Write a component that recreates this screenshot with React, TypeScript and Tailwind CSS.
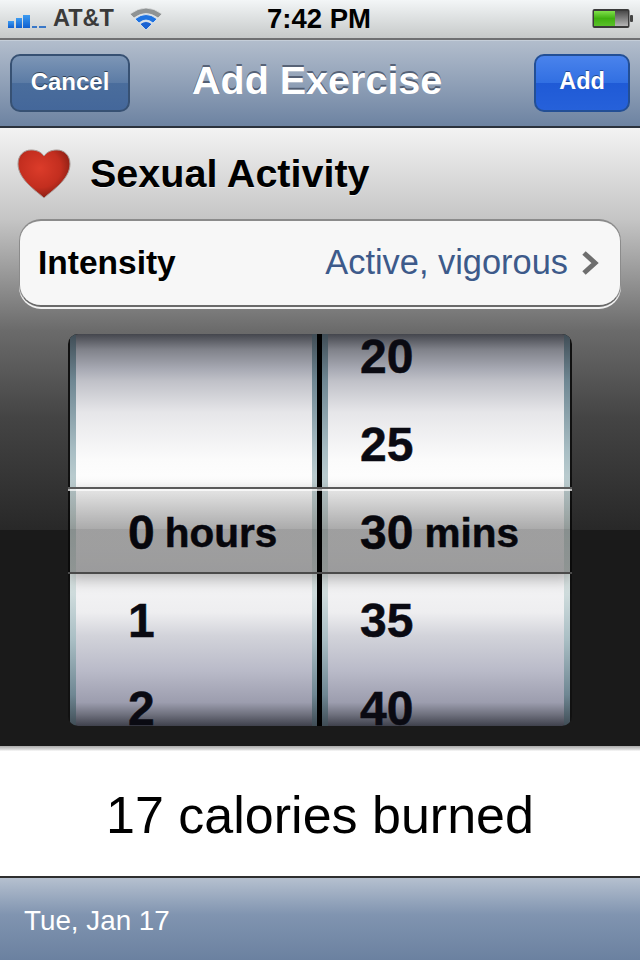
import React from "react";

const Signal = () => (
  <svg width="40" height="20" viewBox="0 0 40 20" className="ml-[8px]">
    <defs>
      <linearGradient id="sig" x1="0" y1="0" x2="0" y2="1">
        <stop offset="0" stopColor="#3d9bf0" />
        <stop offset="1" stopColor="#0f5fd0" />
      </linearGradient>
    </defs>
    <rect x="0" y="12" width="6" height="7" fill="url(#sig)" />
    <rect x="8" y="9" width="6" height="10" fill="url(#sig)" />
    <rect x="15" y="6" width="7" height="13" fill="url(#sig)" />
    <rect x="24" y="17" width="5" height="2" fill="#3a78c8" />
    <rect x="31" y="17" width="7" height="2" fill="#3a78c8" />
  </svg>
);

const Wifi = () => (
  <svg width="34" height="26" viewBox="0 0 34 26" className="ml-[15px]">
    <path d="M1 8 Q17 -4 33 8 L29 12 Q17 3 5 12 Z" fill="#8f9394" stroke="#e8eaea" strokeWidth="0.7" />
    <path d="M6 13 Q17 4 28 13 L24 17 Q17 11 10 17 Z" fill="#1f73e0" stroke="#f2f4f4" strokeWidth="0.7" />
    <path d="M11 18 Q17 13 23 18 L17 24 Z" fill="#1a62d2" stroke="#f2f4f4" strokeWidth="0.7" />
  </svg>
);

const Battery = () => (
  <svg width="42" height="22" viewBox="0 0 42 22">
    <defs>
      <linearGradient id="bat" x1="0" y1="0" x2="0" y2="1">
        <stop offset="0" stopColor="#7fe04a" />
        <stop offset="0.5" stopColor="#3fb010" />
        <stop offset="1" stopColor="#5ac02a" />
      </linearGradient>
      <linearGradient id="batEmpty" x1="0" y1="0" x2="0" y2="1">
        <stop offset="0" stopColor="#4a4a4a" />
        <stop offset="1" stopColor="#b5b5b5" />
      </linearGradient>
    </defs>
    <rect x="0.5" y="1" width="37" height="19" rx="2" fill="#3a3a3a" />
    <rect x="2" y="3" width="21" height="15" fill="url(#bat)" />
    <rect x="23" y="3" width="13" height="15" fill="url(#batEmpty)" />
    <rect x="38" y="7" width="3" height="7" rx="1" fill="#444" />
  </svg>
);

const Heart = () => (
  <svg width="56" height="50" viewBox="0 0 56 50">
    <defs>
      <radialGradient id="heart" cx="0.42" cy="0.38" r="0.62">
        <stop offset="0" stopColor="#dc3c2a" />
        <stop offset="0.65" stopColor="#c32e1f" />
        <stop offset="1" stopColor="#8c1f14" />
      </radialGradient>
    </defs>
    <path
      d="M28 49 C22 43 2 31 2 15 C2 6 8 1 15 1 C21 1 25 3 28 7 C31 3 35 1 41 1 C48 1 54 6 54 15 C54 31 34 43 28 49 Z"
      fill="url(#heart)"
      stroke="#a79a96"
      strokeWidth="1"
    />
  </svg>
);

const stripe =
  "bg-[linear-gradient(#3f4c55,#6f8793_12%,#a9bec4_30%,#d5e2e0_48%,#e2ebe9_60%,#a9bec4_78%,#6f8793_92%,#3f4c55)]";
const wheel =
  "flex-1 overflow-hidden bg-[linear-gradient(#44464d,#80828a_4%,#a8aab4_9%,#c0c1c8_12%,#e6e6e9_20%,#fbfbfb_32%,#ffffff_40%,#fafafb_55%,#eeeef0_71%,#d2d3da_77%,#b9bac8_86%,#9c9dae_94%,#70727f_97%,#3f414c)]";
const digit =
  "h-[88px] flex items-center text-[48px] font-bold text-[#0a0a12] [-webkit-text-stroke:0.5px_#0a0a12]";
const selected = "[text-shadow:0_2px_0_rgba(255,255,255,0.55)]";

export default function App() {
  return (
    <div className="w-[640px] h-[960px] overflow-hidden flex flex-col bg-white font-['Liberation_Sans',Arial,sans-serif]">
      {/* status bar */}
      <div className="h-[40px] flex items-center border-b-2 border-[#6f7072] bg-[linear-gradient(#f3f6f7,#c6c9c9)]">
        <Signal />
        <span className="ml-[5px] text-[23.5px] font-bold text-[#3a3a3a]">AT&amp;T</span>
        <Wifi />
        <span className="absolute left-[267px] text-[27.5px] font-bold text-black">7:42 PM</span>
        <div className="ml-auto mr-[6px] flex items-center">
          <Battery />
        </div>
      </div>

      {/* nav bar */}
      <div className="relative h-[88px] flex items-center justify-between px-[10px] border-t border-[#c5ced9] border-b-2 border-b-[#2b323c] bg-[linear-gradient(#b2bdcc,#6d83a2)]">
        <button className="mb-[1px] w-[120px] h-[58px] pb-[2px] rounded-[10px] border-2 border-[#375173] text-[24px] font-bold text-white [text-shadow:0_-1px_0_rgba(0,0,0,0.5)] bg-[linear-gradient(#7d96b6,#5b7ba5_50%,#4a6d9c_50%,#44679a)]">
          Cancel
        </button>
        <h1 className="absolute left-[192px] mb-[5px] text-[39.5px] font-bold text-white [text-shadow:0_-2px_0_rgba(40,50,70,0.6)]">
          Add Exercise
        </h1>
        <button className="mb-[1px] w-[96px] h-[58px] pb-[2px] rounded-[10px] border-2 border-[#234f95] text-[23.5px] font-bold text-white [text-shadow:0_-1px_0_rgba(0,0,0,0.4)] bg-[linear-gradient(#4a83ec,#316fe2_50%,#1f5ad6_50%,#2661da)]">
          Add
        </button>
      </div>

      {/* main content */}
      <div className="h-[618px] flex flex-col bg-[linear-gradient(#f3f3f3,#c6c6c6_90px,#6b6b6b_202px,#444444_290px,#282828_402px,#1a1a1a_402px,#1a1a1a)]">
        <div className="h-[91px] flex items-center pl-[16px] gap-[18px]">
          <Heart />
          <h2 className="text-[39.5px] font-bold text-black [text-shadow:0_1px_0_rgba(255,255,255,0.6)]">
            Sexual Activity
          </h2>
        </div>

        <div className="mx-[19px] h-[88px] flex items-center justify-between pl-[18px] pr-[20px] rounded-[22px] bg-[#f7f7f7] border-t-2 border-x border-[#8b8b8b] border-b-2 border-b-[#6a6a6a] shadow-[0_2px_0_#f2f2f2]">
          <span className="text-[33.5px] font-bold text-black">Intensity</span>
          <div className="flex items-center gap-[12px]">
            <span className="text-[34.4px] text-[#3d5a8a]">Active, vigorous</span>
            <svg width="20" height="26" viewBox="0 0 20 26">
              <path d="M4 3 L15 13 L4 23" fill="none" stroke="#6e6e6e" strokeWidth="5" />
            </svg>
          </div>
        </div>

        <div className="relative mt-[27px] mx-auto w-[504px] h-[392px] flex rounded-[10px] overflow-hidden bg-[#111]">
          <div className={`w-[6px] ml-[2px] ${stripe}`} />
          <div className={wheel}>
            <div className="pl-[52px] mt-[-21px]">
              <div className={digit}>&nbsp;</div>
              <div className={digit}>&nbsp;</div>
              <div className={`${digit} ${selected}`}>
                0<span className="ml-[10px] text-[40.5px]">hours</span>
              </div>
              <div className={digit}>1</div>
              <div className={digit}>2</div>
            </div>
          </div>
          <div className={`w-[5px] ${stripe}`} />
          <div className="w-[5px] bg-black" />
          <div className={`w-[6px] ${stripe}`} />
          <div className={wheel}>
            <div className="pl-[32px] mt-[-21px]">
              <div className={digit}>20</div>
              <div className={digit}>25</div>
              <div className={`${digit} ${selected}`}>
                30<span className="ml-[11px] text-[40.5px]">mins</span>
              </div>
              <div className={digit}>35</div>
              <div className={digit}>40</div>
            </div>
          </div>
          <div className={`w-[6px] mr-[2px] ${stripe}`} />

          {/* selection bar over the wheels */}
          <div className="absolute left-0 right-0 top-[153px] h-[87px] border-t-2 border-b-2 border-t-[#5a5a5a] border-b-[#4a4a4a] shadow-[inset_0_2px_0_rgba(255,255,255,0.7),0_5px_14px_rgba(0,0,0,0.3)] bg-[linear-gradient(rgba(0,0,0,0.1),rgba(0,0,0,0.32)_48%,rgba(0,0,0,0.37)_48%,rgba(0,0,0,0.37))]" />
        </div>
      </div>

      {/* calories */}
      <div className="h-[132px] pt-[8px] flex items-center justify-center bg-[linear-gradient(#a8a8a8,#e2e2e2_4px,#ffffff_5px)] border-b-2 border-[#2f2f2f]">
        <span className="text-[52px] text-black">17 calories burned</span>
      </div>

      {/* date bar */}
      <div className="flex-1 flex items-center pl-[24px] pt-[4px] bg-[linear-gradient(#b5c0cf,#8094b0_45%,#6b81a0)]">
        <span className="text-[27.8px] text-white">Tue, Jan 17</span>
      </div>
    </div>
  );
}
